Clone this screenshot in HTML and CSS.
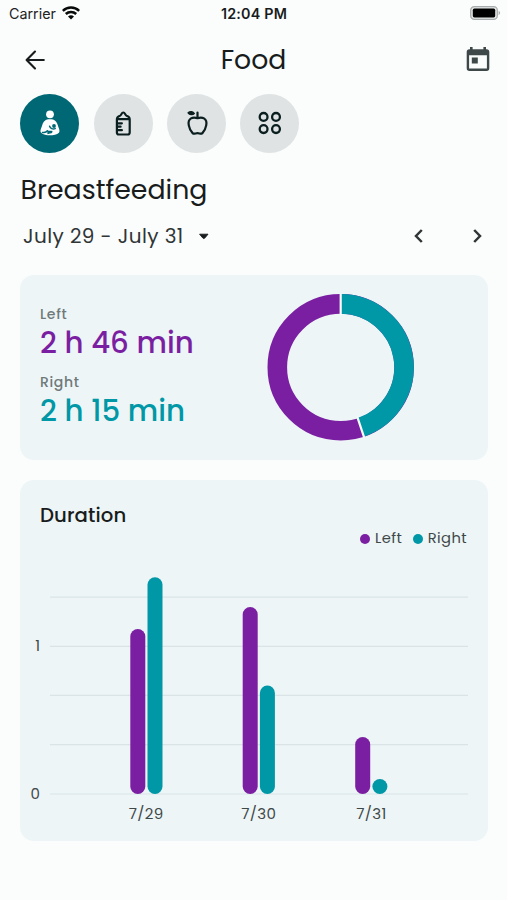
FILE: index.html
```html
<!DOCTYPE html>
<html lang="en">
<head>
<meta charset="utf-8">
<title>Food</title>
<link rel="stylesheet" href="styles.css">
</head>
<body>
<div class="status">
  <div class="carrier"><span>Carrier</span>
    <svg width="18" height="14" viewBox="0 0 18 14" fill="none" stroke="#080a0a" stroke-width="2.500"><path d="M.8 4.900a11.800 11.800 0 0 1 16.400 0"/><path d="M3.800 8a7.500 7.500 0 0 1 10.400 0"/><path d="M9 13.600 6 10.600a4.300 4.300 0 0 1 6 0z" fill="#080a0a" stroke="none"/></svg>
  </div>
  <div class="clock">12:04 PM</div>
  <svg class="battery" width="31" height="14" viewBox="0 0 31 14"><rect x=".7" y=".7" width="26.600" height="12.600" rx="3.600" fill="#e6e8e8" stroke="#a9acac" stroke-width="1.300"/><rect x="2.800" y="2.600" width="22.400" height="8.800" rx="1.600" fill="#000"/><path d="M28.600 4.800q3 2.200 0 4.400z" fill="#a9acac"/></svg>
</div>
<header class="bar">
  <svg class="back" width="20" height="20" viewBox="0 0 20 20" fill="none" stroke="#191c1c" stroke-width="2.100" stroke-linecap="round" stroke-linejoin="round"><path d="M18.800 10H1.800M10 1.500 1.600 10l8.400 8.500"/></svg>
  <h1>Food</h1>
  <svg class="calendar" width="24" height="26" viewBox="0 0 24 26"><path d="M4 1h2.600v2.300h10.800V1H20v2.300h.6a2.700 2.700 0 0 1 2.700 2.700v16.300a2.700 2.700 0 0 1-2.700 2.700H3.400A2.700 2.700 0 0 1 .7 22.300V6a2.700 2.700 0 0 1 2.700-2.700H4zM3.100 9.300v13.200h17.800V9.300z" fill="#3f4849" fill-rule="evenodd"/><path d="M5.800 11.500h6v6h-6z" fill="#3f4849"/></svg>
</header>
<nav class="tabs">
  <div class="tab active"><svg width="24" height="30" viewBox="0 0 24 30"><circle cx="12" cy="6.300" r="3.900" fill="#fff"/><path d="M12 11.300c4.600 0 6.400 1.900 7.700 5.700 1.400 4 2.500 6.200 1.200 7.700-1.900 2-5.700 2.500-8.900 2.500s-7-.5-8.900-2.500c-1.300-1.500-.2-3.700 1.200-7.700 1.300-3.800 3.100-5.700 7.700-5.700z" fill="#fff"/><circle cx="16" cy="18" r="1.900" fill="#006874"/><path d="M11.600 18.300c.8 2.300 3.300 3.200 5.600 2.300M4.500 24.400c2.600.5 4-.3 5-1.600" fill="none" stroke="#006874" stroke-width="1.500" stroke-linecap="round"/><path d="M9.300 22.800h4.200q1.200 0 1 1.100-.6 1.500-2.500 1.500l-2.600.8z" fill="#006874"/></svg></div>
  <div class="tab"><svg width="24" height="30" viewBox="0 0 24 30" fill="none" stroke="#0b1f20" stroke-width="2.200" stroke-linejoin="round" stroke-linecap="round"><path d="M5.900 11.200c0-1.800 1.200-3 3.100-3.500 1.400-.5 1.500-3.200 3.300-3.200s1.900 2.700 3.300 3.200c1.900.5 3.100 1.700 3.100 3.500zM5.900 11.200v13.300q0 2 2 2h8.800q2 0 2-2V11.200M6.300 15.300h4.600M6.300 18.700h3.300M6.300 22.200h4.600"/></svg></div>
  <div class="tab"><svg width="24" height="30" viewBox="0 0 24 30" fill="none" stroke="#0b1f20" stroke-width="2.200" stroke-linejoin="round" stroke-linecap="round"><path d="M12.500 10.200c-2.500-.8-4.400-1-6.500.2-2.200 1.300-2.800 4.100-2.200 7 .5 2.800 1.800 5.800 3.800 7.700 1.600 1.500 2.700.1 4.900.1s3.300 1.400 4.900-.1c2-1.900 3.300-4.900 3.800-7.700.6-2.900 0-5.700-2.200-7-2.100-1.200-4-1-6.500-.2zV4.500"/><path d="M3 4.800c2.200-1.800 5.200-1.400 6.400.7C7.500 7.300 4.600 7 3 4.800z" fill="#0b1f20" stroke-width="1.200"/></svg></div>
  <div class="tab"><svg width="24" height="24" viewBox="0 0 24 24" fill="none" stroke="#0b1f20" stroke-width="2.300"><circle cx="5.600" cy="5.900" r="3.900"/><circle cx="18" cy="5.900" r="3.900"/><circle cx="5.600" cy="18.100" r="3.900"/><circle cx="18" cy="18.100" r="3.900"/></svg></div>
</nav>
<h2>Breastfeeding</h2>
<div class="range">
  <span class="dates">July 29 - July 31</span>
  <svg width="11" height="7" viewBox="0 0 11 7"><path d="M1.600 1.200h8.400L6.800 5q-1 1-2 0z" fill="#191c1c" stroke="#191c1c" stroke-width=".9" stroke-linejoin="round"/></svg>
  <div class="arrows">
    <svg width="10" height="16" viewBox="0 0 10 16"><path d="M7.800 2 2 8l5.800 6"/></svg>
    <svg width="10" height="16" viewBox="0 0 10 16"><path d="m2.200 2 5.800 6-5.800 6"/></svg>
  </div>
</div>
<section class="card summary">
  <div class="totals">
    <div class="label">Left</div>
    <div class="value left">2 h 46 min</div>
    <div class="label">Right</div>
    <div class="value right">2 h 15 min</div>
  </div>
  <svg class="donut" width="148" height="148" viewBox="-73.700 -74.300 148 148" fill="none">
    <circle r="63.400" stroke="#7b1fa2" stroke-width="19.600"/>
    <path d="M0-63.400A63.400 63.400 0 0 1 20.100 60.100" stroke="#0097a7" stroke-width="19.600"/>
    <path d="M0-52V-74M16.500 49.400 23.500 70.300" stroke="#f5fbfb" stroke-width="2.200"/>
  </svg>
</section>
<section class="card duration">
  <h3>Duration</h3>
  <div class="legend"><i class="dot purple"></i><span class="l1">Left</span><i class="dot teal"></i><span>Right</span></div>
  <svg class="chart" width="467" height="270" viewBox="20 560 467 270">
    <path d="M50 597.100H468M50 646.300H468M50 695.300H468M50 744.600H468M50 794H468" stroke="#dae4e6" stroke-width="1.200"/>
    <g fill="#7b1fa2">
      <rect x="130.300" y="629" width="15" height="165" rx="7.500"/>
      <rect x="242.700" y="607" width="15" height="187" rx="7.500"/>
      <rect x="355.200" y="737" width="15" height="57" rx="7.500"/>
    </g>
    <g fill="#0097a7">
      <rect x="147.500" y="577.200" width="15" height="216.800" rx="7.500"/>
      <rect x="259.900" y="685.500" width="15" height="108.500" rx="7.500"/>
      <rect x="372.400" y="779" width="15" height="15" rx="7.500"/>
    </g>
    <g class="axis">
      <text x="40" y="651.300" text-anchor="end">1</text>
      <text x="40" y="798.500" text-anchor="end">0</text>
      <g text-anchor="middle" letter-spacing=".4">
        <text x="146.200" y="819.400">7/29</text>
        <text x="258.800" y="819.400">7/30</text>
        <text x="371.500" y="819.400">7/31</text>
      </g>
    </g>
  </svg>
</section>
</body>
</html>
```
FILE: styles.css
```css
* { box-sizing: border-box; }
body {
  margin: 0;
  width: 507px;
  height: 900px;
  overflow: hidden;
  background: #fbfdfd;
  color: #191c1c;
  font-family: Poppins, Inter, "Liberation Sans", sans-serif;
}
svg { display: block; flex: none; }
h1, h2, h3 { margin: 0; font-weight: 400; }
.status {
  display: grid;
  grid-template-columns: 1fr auto 1fr;
  align-items: center;
  height: 28px;
  padding: 0 6px 2px 9px;
  font-family: Inter, sans-serif;
  font-size: 14.300px;
}
.carrier { display: flex; align-items: center; gap: 6px; color: #222; }
.clock { font-weight: 600; letter-spacing: .2px; margin-right: 2px; }
.battery { justify-self: end; }
.bar {
  display: grid;
  grid-template-columns: 1fr auto 1fr;
  align-items: center;
  height: 65.500px;
  padding: 0 17px 2px 25px;
}
.bar h1 { font-size: 26.700px; line-height: 32px; margin-right: 8px; }
.calendar { justify-self: end; margin-bottom: 2px; }
.tabs { display: flex; gap: 14.400px; padding-left: 20.300px; height: 59px; }
.tab {
  width: 59px;
  height: 59px;
  border-radius: 50%;
  background: #dfe3e3;
  display: flex;
  align-items: center;
  justify-content: center;
}
.tab.active { background: #006874; }
h2 {
  margin-top: 17px;
  padding-left: 20.500px;
  font-size: 26.800px;
  line-height: 40px;
}
.range { display: flex; align-items: center; height: 40px; margin-top: 6.500px; padding: 0 25px 0 23px; }
.dates { width: 175px; font-size: 20px; letter-spacing: .4px; color: #303535; white-space: nowrap; }
.arrows { display: flex; gap: 48.500px; margin-left: auto; fill: none; stroke: #303636; stroke-width: 2.500; }
.card { background: #edf5f6; border-radius: 14px; width: 467.500px; margin-left: 20px; }
.summary { display: flex; height: 185px; margin-top: 19px; padding: 18px 0 0 20px; }
.totals { width: 227px; padding-top: 11.500px; }
.label { height: 18px; line-height: 18px; font-size: 14px; letter-spacing: .65px; color: #6f797a; }
.value { height: 40px; line-height: 40px; margin-bottom: 10px; font-size: 29.300px; font-weight: 500; white-space: nowrap; }
.label { font-weight: 500; }
.left { color: #7b1fa2; }
.right { color: #0097a7; }
.duration { height: 361px; margin-top: 20px; padding-top: 19.500px; }
h3 { padding-left: 20px; font-size: 19.700px; line-height: 30px; font-weight: 500; letter-spacing: .1px; }
.legend {
  display: flex;
  justify-content: flex-end;
  align-items: center;
  height: 18px;
  margin-right: 20.500px;
  font-size: 14.700px;
  letter-spacing: .4px;
  color: #3f4849;
}
.dot { width: 10px; height: 10px; border-radius: 50%; margin-right: 5px; }
.purple { background: #7b1fa2; }
.teal { background: #0097a7; }
.l1 { margin-right: 10.500px; }
.chart { margin-top: 12.500px; }
.axis { fill: #3f4849; font-size: 15px; }
```
